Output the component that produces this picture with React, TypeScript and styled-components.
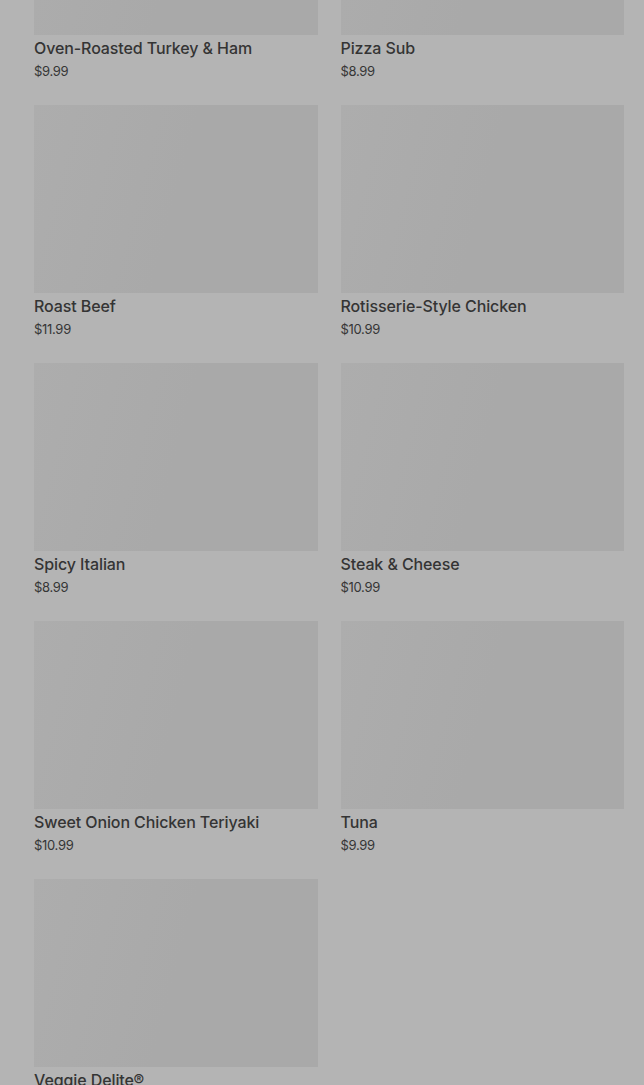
import React from "react";
import styled, { createGlobalStyle } from "styled-components";

const GlobalStyle = createGlobalStyle`
  html, body {
    margin: 0;
    padding: 0;
    background: #b4b4b4;
    font-family: Inter, "Noto Sans", sans-serif;
    overflow: hidden;
  }
`;

const Page = styled.main`
  background: #b4b4b4;
  min-height: 1085px;
  overflow: hidden;
`;

const Grid = styled.div`
  display: grid;
  grid-template-columns: 1fr 1fr;
  column-gap: 23px;
  row-gap: 25px;
  padding: 0 20px 0 34px;
  margin-top: -153px;
`;

const Card = styled.article`
  display: flex;
  flex-direction: column;
`;

const Thumb = styled.div`
  height: 188px;
  background: linear-gradient(105deg, #adadad 0%, #ababab 25%, #a9a9a9 50%, #a9a9a9 100%);
`;

const Title = styled.h3`
  margin: 3px 0 0;
  font-size: 16px;
  line-height: 20px;
  font-weight: 500;
  color: #343434;
  letter-spacing: -0.1px;
`;

const Price = styled.p`
  margin: 4px 0 0;
  font-size: 13px;
  line-height: 18px;
  font-weight: 400;
  color: #363636;
  letter-spacing: -0.3px;
`;

const items = [
  { name: "Oven-Roasted Turkey & Ham", price: "$9.99" },
  { name: "Pizza Sub", price: "$8.99" },
  { name: "Roast Beef", price: "$11.99" },
  { name: "Rotisserie-Style Chicken", price: "$10.99" },
  { name: "Spicy Italian", price: "$8.99" },
  { name: "Steak & Cheese", price: "$10.99" },
  { name: "Sweet Onion Chicken Teriyaki", price: "$10.99" },
  { name: "Tuna", price: "$9.99" },
  { name: "Veggie Delite®", price: "$8.99" },
];

export default function App() {
  return (
    <Page>
      <GlobalStyle />
      <Grid>
        {items.map((it) => (
          <Card key={it.name}>
            <Thumb />
            <Title>{it.name}</Title>
            <Price>{it.price}</Price>
          </Card>
        ))}
      </Grid>
    </Page>
  );
}
